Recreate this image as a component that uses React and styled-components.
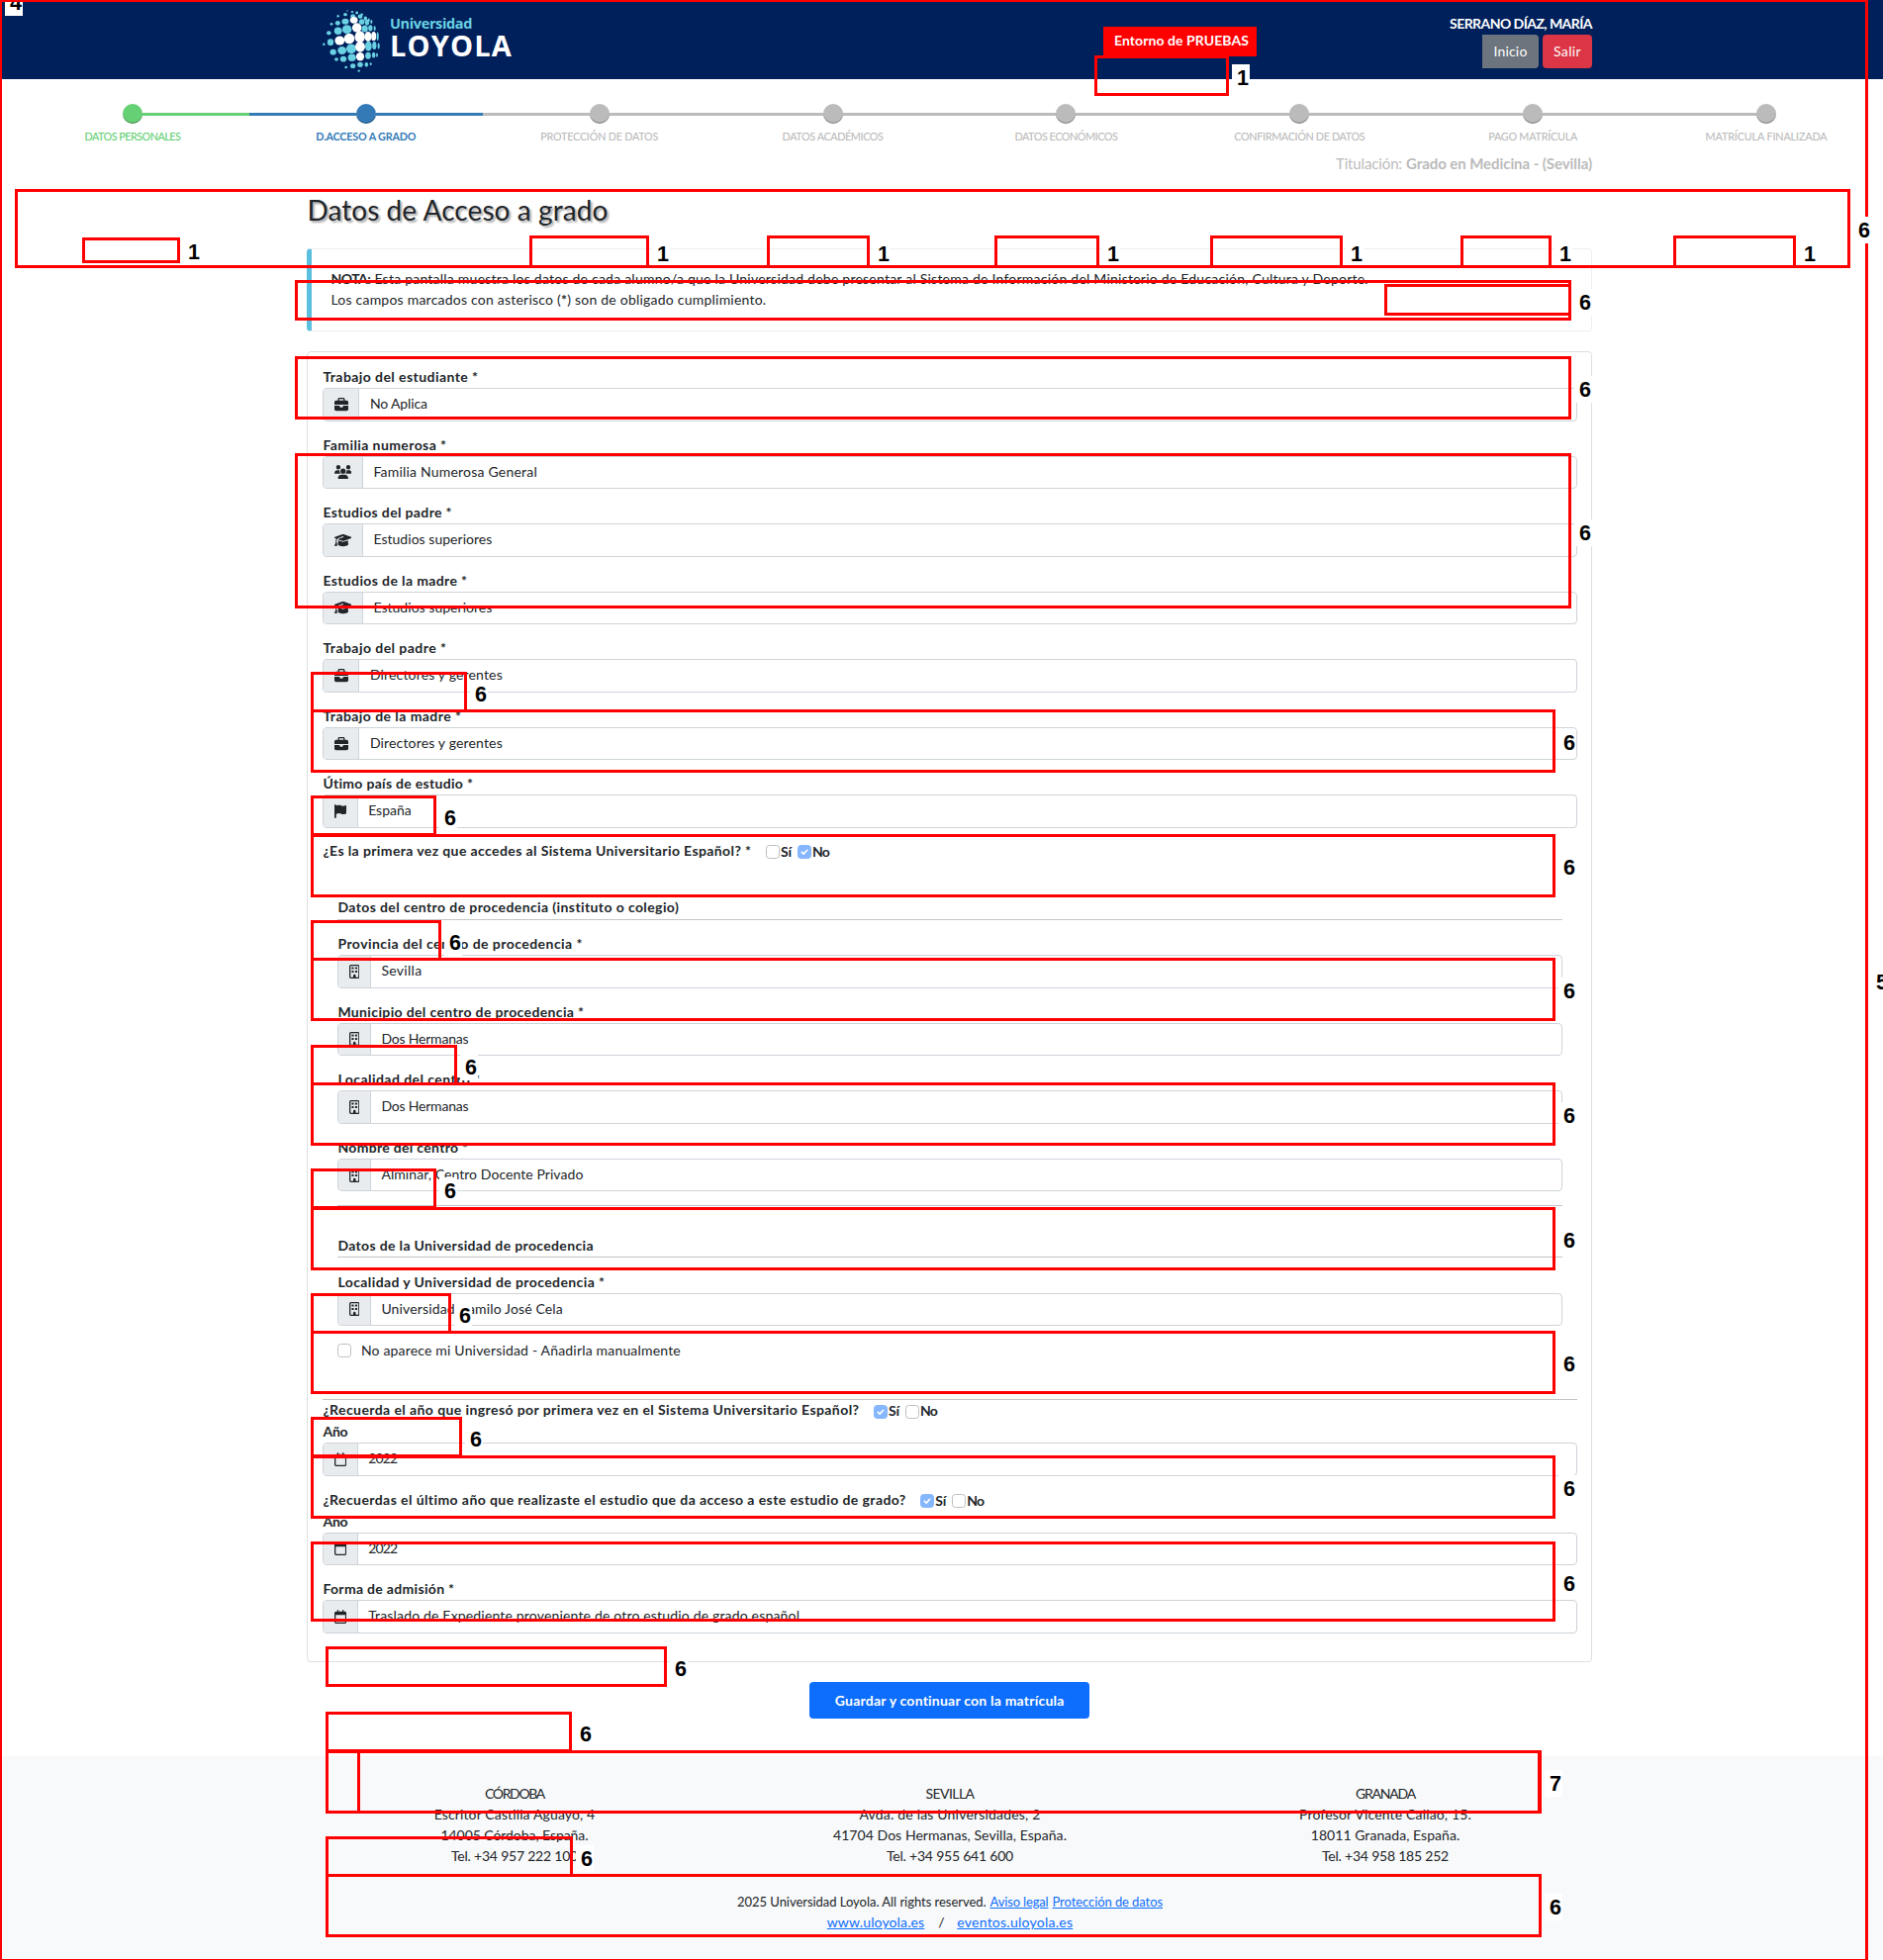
import React, { useLayoutEffect, useRef, useState } from "react";
import styled, { createGlobalStyle, css } from "styled-components";
import {
  FaBriefcase,
  FaUsers,
  FaGraduationCap,
  FaFlag,
  FaRegBuilding,
  FaRegCalendar,
} from "react-icons/fa6";

const GlobalStyle = createGlobalStyle`
  *, *::before, *::after { box-sizing: border-box; }
  html, body { margin: 0; padding: 0; overflow: hidden; }
  body {
    font-family: Lato, "Open Sans", sans-serif;
    font-size: 14px;
    line-height: 21px;
    color: #212529;
    background: #fff;
  }
`;

/* Text whose tracking is computed so that the line takes a given width. */
const FitText = styled.span`
  display: inline-block;
  white-space: pre;
  text-decoration: inherit;
`;

function Fit({ w, children }) {
  const ref = useRef(null);
  const [tracking, setTracking] = useState(0);
  useLayoutEffect(() => {
    const el = ref.current;
    const previous = el.style.letterSpacing;
    el.style.letterSpacing = "0px";
    const natural = el.getBoundingClientRect().width;
    el.style.letterSpacing = previous;
    setTracking((w - natural) / el.textContent.length);
  }, [w]);
  return (
    <FitText ref={ref} style={{ letterSpacing: `${tracking}px` }}>
      {children}
    </FitText>
  );
}

const Viewport = styled.div`
  position: relative;
  width: 1903px;
  height: 1981px;
  overflow: hidden;
`;

const Page = styled.div`
  display: flex;
  flex-direction: column;
  width: 1920px;
  height: 1981px;
`;

const Header = styled.header`
  display: flex;
  justify-content: center;
  flex: none;
  height: 80px;
  background: #00205b;
`;

const HeaderInner = styled.div`
  display: flex;
  width: 1298px;
`;

const Brand = styled.div`
  display: flex;
  flex: 1;
  padding: 5px 0 0 9px;
`;

const BrandName = styled.div`
  display: flex;
  flex-direction: column;
  margin: 9px 0 0 4px;
  font-family: "Open Sans", sans-serif;
  color: #fff;
`;

const BrandTop = styled.span`
  font-size: 14.5px;
  font-weight: 700;
  line-height: 20px;
  color: #6ad1e3;
`;

const BrandMain = styled.span`
  margin-top: -6px;
  font-size: 29px;
  font-weight: 700;
  line-height: 36px;
`;

const EnvTag = styled.div`
  height: 30px;
  width: 155px;
  margin: 27px 195px 0 0;
  padding: 3px 0 0 11px;
  background: #f00;
  color: #fff;
  font-weight: 700;
`;

const Account = styled.div`
  display: flex;
  flex-direction: column;
  align-items: flex-end;
  width: 144px;
  padding-top: 13px;
  color: #fff;
  font-weight: 700;
`;

const AccountButtons = styled.div`
  display: flex;
  gap: 4px;
  margin-top: 1px;
`;

const SmallButton = styled.button`
  width: ${(p) => p.$width}px;
  height: 34px;
  padding: 0 0 2px;
  border: 0;
  border-radius: ${(p) => (p.$danger ? "4px" : "0 4px 4px 0")};
  background: ${(p) => (p.$danger ? "#dc3545" : "#6c757d")};
  color: #fff;
  font: 400 14px/21px Lato, sans-serif;
`;

const Steps = styled.ol`
  display: flex;
  flex: none;
  width: 1887px;
  height: 68px;
  margin: 25px 0 0 16px;
  padding: 0;
  list-style: none;
`;

const stepColor = { done: "#65d074", active: "#337ab7", idle: "#bbb" };

const Step = styled.li`
  display: flex;
  flex-direction: column;
  align-items: center;
  flex: 1;
  color: ${(p) => stepColor[p.$state]};
  font-size: 10.8px;
  font-weight: ${(p) => (p.$state === "active" ? 700 : 500)};
  text-align: center;
`;

const StepTrack = styled.div`
  display: flex;
  align-items: center;
  width: 100%;
  height: 20px;
`;

const StepLine = styled.span`
  flex: 1;
  height: 3px;
  margin-top: 1px;
  background: ${(p) => (p.$hidden ? "transparent" : "currentColor")};
`;

const StepDot = styled.span`
  width: 20px;
  height: 20px;
  border-radius: 50%;
  background: currentColor;
  box-shadow: inset 0 -1px 0 rgba(0, 0, 0, 0.35);
`;

const StepLabel = styled.span`
  margin-top: 2px;
`;

const Container = styled.main`
  display: flex;
  flex-direction: column;
  flex: none;
  width: 1298.6px;
  height: 1602px;
  margin-left: 310.4px;
`;

const Degree = styled.div`
  display: flex;
  justify-content: flex-end;
  gap: 4px;
  margin-top: -18px;
  font-size: 15px;
  color: #bbb;
`;

const Title = styled.h1`
  margin: 18px 0 0;
  font-size: 28px;
  font-weight: 400;
  line-height: 36px;
  text-shadow: 2px 2px 2px #aaa;
`;

const Note = styled.section`
  height: 84px;
  margin-top: 21px;
  padding: 19px 19px;
  border: 1px solid #eee;
  border-left: 5px solid #5bc0de;
  border-radius: 4px;
`;

const NoteLine = styled.div`
  display: flex;
  gap: 4px;
  height: 21px;
`;

const Card = styled.form`
  height: 1325px;
  margin-top: 20px;
  padding: 15px 14px 0 15px;
  border: 1px solid #dfdfdf;
  border-radius: 4px;
`;

const FieldBlock = styled.div`
  display: flex;
  flex-direction: column;
  height: 68.57px;
`;

const Label = styled.label`
  height: 21px;
  font-weight: 700;
  line-height: 19px;
`;

const InputGroup = styled.div`
  display: flex;
  height: 33.57px;
  border: 1px solid #ced4da;
  border-radius: 4px;
  overflow: hidden;
`;

/* The cell follows the width of the glyph in it; its height is fixed. */
const Addon = styled.span`
  display: flex;
  align-items: center;
  flex: none;
  padding: 0 10.5px;
  border-right: 1px solid #ced4da;
  background: #e9ecef;

  svg {
    width: ${(p) => p.$glyph}px;
    height: 14px;
  }
`;

const Value = styled.span`
  padding: 4px 10.5px;
`;

const Question = styled.div`
  display: flex;
  height: ${(p) => p.$height}px;
  margin-top: ${(p) => p.$lift || 0}px;
  font-weight: 700;
  line-height: 19px;
`;

const Option = styled.span`
  display: flex;
  align-items: flex-start;
  padding-top: 1px;
  margin-left: ${(p) => p.$gap}px;
`;

const Box = styled.span`
  display: flex;
  align-items: center;
  justify-content: center;
  flex: none;
  width: 14px;
  height: 14px;
  margin: 3.5px 1px 0 0;
  border: 1px solid #bfbfbf;
  border-radius: 3.5px;
  ${(p) =>
    p.$checked &&
    css`
      border-color: #86b7fe;
      background: #86b7fe;
    `}
`;

const Section = styled.section`
  height: ${(p) => p.$height}px;
  padding: 0 15px;
`;

const SectionTitle = styled.h2`
  height: 22.3px;
  margin: 0 0 14.3px;
  border-bottom: 1px solid #c4c5c6;
  font-size: 14px;
  font-weight: 700;
  line-height: 20px;
`;

const Divider = styled.div`
  height: 1px;
  background: #c4c5c6;
`;

const ManualRow = styled.div`
  display: flex;
  gap: 8.5px;
`;

const Submit = styled.button`
  align-self: center;
  width: 283px;
  height: 37px;
  margin-top: 20px;
  padding: 0;
  border: 0;
  border-radius: 4px;
  background: #0d6efd;
  color: #fff;
  font: 700 14px/21px Lato, sans-serif;
`;

const Footer = styled.footer`
  flex: 1;
  background: #f8f9fa;
`;

const Campuses = styled.div`
  display: grid;
  grid-template-columns: repeat(3, 440px);
  justify-content: center;
  padding-top: 27px;
`;

const Campus = styled.address`
  display: flex;
  flex-direction: column;
  align-items: center;
  font-style: normal;
`;

const FooterRow = styled.div`
  display: flex;
  justify-content: center;
  gap: ${(p) => p.$gap}px;
  margin-top: ${(p) => p.$top}px;
  font-size: ${(p) => p.$size}px;
  line-height: 21px;
`;

const Link = styled.a`
  color: #0d6efd;
  text-decoration: underline;
`;

/* Review overlay: red frames over the page with a count beside each. */
const Overlay = styled.div`
  position: absolute;
  inset: 0;
  pointer-events: none;
`;

const Frame = styled.div`
  position: absolute;
  left: ${(p) => p.$x}px;
  top: ${(p) => p.$y}px;
  width: ${(p) => p.$r - p.$x}px;
  height: ${(p) => p.$b - p.$y}px;
  border: solid #f00;
  border-width: ${(p) => p.$bw || "3px"};
`;

const Count = styled.div`
  position: absolute;
  left: ${(p) => p.$x}px;
  top: ${(p) => p.$y}px;
  width: 18px;
  height: 27px;
  padding-left: 5px;
  background: #fff;
  color: #000;
  font: 700 21.5px/28px "Liberation Sans", Arial, sans-serif;
`;

const C = "#6ad1e3";
const W = "#fff";
const globeDots = [
  [93, 18, 2, 2, C], [108, 21, 4, 3, C], [122, 24, 4, 4, C], [137, 29, 4, 3, C],
  [65, 34, 3.5, 3.5, C], [87, 29, 5.5, 4.5, C], [110, 34, 7, 6, C], [132, 35, 7, 6, C], [148, 41, 5, 6, C], [158, 46, 3, 5, C],
  [45, 58, 4, 4, C], [64, 55, 7, 6.5, C], [87, 50, 10, 8.5, C], [113, 46, 11, 9.5, W], [137, 51, 8, 8, C], [153, 53, 6, 8, C], [166, 51, 3, 6, C],
  [37, 85, 6.5, 6, C], [65, 79, 11, 10.5, C], [92, 74, 13.5, 12.5, C], [122, 69, 13.5, 13.5, W], [146, 72, 9, 10, C], [163, 70, 6, 9, C], [176, 71, 3, 7, C],
  [22, 119, 3.5, 3.5, C], [42, 113, 9, 9.5, C], [70, 108, 14, 13, W], [99, 102, 15, 15, W], [131, 97, 14.5, 17, W], [156, 96, 10, 14, W], [173, 95, 7, 13, W], [185, 95, 3, 12, C],
  [50, 143, 9, 8, C], [77, 138, 12.5, 11.5, C], [105, 133, 14, 14, C], [132, 127, 14, 15, W], [157, 125, 9.5, 14, C], [175, 123, 6, 11, C], [188, 124, 3, 9, C],
  [60, 165, 5.5, 5, C], [81, 164, 9, 8, C], [107, 160, 11.5, 10.5, C], [132, 157, 11.5, 12, W], [156, 154, 8, 10, C], [173, 152, 5, 8, C], [183, 152, 2.5, 6, C],
  [89, 189, 4, 3.5, C], [110, 185, 7.5, 6.5, C], [132, 181, 8, 7.5, C], [151, 181, 5, 6.5, C], [164, 179, 3, 4, C],
  [128, 200, 3.5, 3, C],
];

const steps = [
  ["DATOS PERSONALES", 97, "done"],
  ["D.ACCESO A GRADO", 101, "active"],
  ["PROTECCIÓN DE DATOS", 119, "idle"],
  ["DATOS ACADÉMICOS", 102, "idle"],
  ["DATOS ECONÓMICOS", 104, "idle"],
  ["CONFIRMACIÓN DE DATOS", 132, "idle"],
  ["PAGO MATRÍCULA", 90, "idle"],
  ["MATRÍCULA FINALIZADA", 123, "idle"],
];

const icons = {
  briefcase: [FaBriefcase, 14],
  users: [FaUsers, 17.5],
  cap: [FaGraduationCap, 17.5],
  flag: [FaFlag, 12.25],
  building: [FaRegBuilding, 10.5],
  calendar: [FaRegCalendar, 12.25],
};

const familyFields = [
  ["Trabajo del estudiante *", 157, "briefcase", "No Aplica", 58],
  ["Familia numerosa *", 125, "users", "Familia Numerosa General", 165.5],
  ["Estudios del padre *", 130.5, "cap", "Estudios superiores", 120],
  ["Estudios de la madre *", 146, "cap", "Estudios superiores", 120],
  ["Trabajo del padre *", 125, "briefcase", "Directores y gerentes", 134],
  ["Trabajo de la madre *", 140, "briefcase", "Directores y gerentes", 134],
  ["Útimo país de estudio *", 152, "flag", "España", 43.5],
];

const schoolFields = [
  ["Provincia del centro de procedencia *", 247.5, "building", "Sevilla", 41],
  ["Municipio del centro de procedencia *", 249, "building", "Dos Hermanas", 88],
  ["Localidad del centro *", 144, "building", "Dos Hermanas", 88],
  ["Nombre del centro *", 132, "building", "Alminar, Centro Docente Privado", 204],
];

const campuses = [
  [["CÓRDOBA", 60], ["Escritor Castilla Aguayo, 4", 163], ["14005 Córdoba, España.", 149], ["Tel. +34 957 222 100", 128]],
  [["SEVILLA", 49], ["Avda. de las Universidades, 2", 183], ["41704 Dos Hermanas, Sevilla, España.", 236], ["Tel. +34 955 641 600", 128]],
  [["GRANADA", 60], ["Profesor Vicente Callao, 15.", 174], ["18011 Granada, España.", 150.5], ["Tel. +34 958 185 252", 128]],
];

/* [left, top, right, bottom, count] */
const frames = [
  [1106, 56, 1242, 97, 1],
  [83, 240, 182, 266, 1],
  [535, 238, 656, 271, 1],
  [775, 238, 879, 271, 1],
  [1005, 238, 1111, 271, 1],
  [1223, 238, 1357, 271, 1],
  [1476, 238, 1568, 271, 1],
  [1691, 238, 1815, 271, 1],
  [15, 191, 1870, 271],
  [298, 283, 1588, 324, 6],
  [1399, 287, 1588, 319],
  [298, 360, 1588, 424, 6],
  [298, 458, 1588, 615, 6],
  [314, 679, 472, 720, 6],
  [314, 717, 1572, 781, 6],
  [314, 804, 441, 845, 6],
  [314, 843, 1572, 907, 6],
  [314, 930, 446, 971, 6],
  [314, 968, 1572, 1032, 6],
  [314, 1056, 462, 1097, 6],
  [314, 1094, 1572, 1158, 6],
  [314, 1181, 441, 1222, 6],
  [314, 1220, 1572, 1284, 6],
  [314, 1307, 456, 1348, 6],
  [314, 1345, 1572, 1409, 6],
  [314, 1432, 467, 1473, 6],
  [314, 1471, 1572, 1535, 6],
  [314, 1558, 1572, 1639, 6],
  [329, 1664, 674, 1705, 6],
  [329, 1730, 578, 1771, 6],
  [361, 1769, 1557, 1833],
  [329, 1769, 1558, 1833, 7],
  [329, 1856, 579, 1897, 6],
  [329, 1894, 1558, 1958, 6],
];

function Globe() {
  return (
    <svg width="70" height="72" viewBox="0 0 210 216">
      {globeDots.map(([cx, cy, rx, ry, fill]) => (
        <ellipse key={`${cx}-${cy}`} cx={cx} cy={cy} rx={rx * 1.06} ry={ry * 1.06} fill={fill} />
      ))}
    </svg>
  );
}

function Field({ label, labelWidth, icon, value, valueWidth }) {
  const [Icon, glyph] = icons[icon];
  return (
    <FieldBlock>
      <Label><Fit w={labelWidth}>{label}</Fit></Label>
      <InputGroup>
        <Addon $glyph={glyph}><Icon /></Addon>
        <Value><Fit w={valueWidth}>{value}</Fit></Value>
      </InputGroup>
    </FieldBlock>
  );
}

const renderFields = (fields) =>
  fields.map(([label, lw, icon, value, vw]) => (
    <Field key={label} label={label} labelWidth={lw} icon={icon} value={value} valueWidth={vw} />
  ));

function Check({ checked }) {
  return (
    <Box $checked={checked}>
      {checked && (
        <svg width="8" height="8" viewBox="0 0 8 8">
          <path d="M1.2 4.2l1.9 1.9 3.6-3.8" fill="none" stroke="#fff" strokeWidth="1.6" strokeLinecap="round" strokeLinejoin="round" />
        </svg>
      )}
    </Box>
  );
}

function YesNo({ text, width, yes, height, lift }) {
  return (
    <Question $height={height} $lift={lift}>
      <Fit w={width}>{text}</Fit>
      <Option $gap={14.5}><Check checked={yes} /><Fit w={11}>Sí</Fit></Option>
      <Option $gap={6}><Check checked={!yes} /><Fit w={17}>No</Fit></Option>
    </Question>
  );
}

export default function App() {
  return (
    <Viewport>
      <GlobalStyle />
      <Page>
        <Header>
          <HeaderInner>
            <Brand>
              <Globe />
              <BrandName>
                <BrandTop><Fit w={83}>Universidad</Fit></BrandTop>
                <BrandMain><Fit w={124}>LOYOLA</Fit></BrandMain>
              </BrandName>
            </Brand>
            <EnvTag><Fit w={136}>Entorno de PRUEBAS</Fit></EnvTag>
            <Account>
              <Fit w={144}>SERRANO DÍAZ, MARÍA</Fit>
              <AccountButtons>
                <SmallButton $width={57}><Fit w={34}>Inicio</Fit></SmallButton>
                <SmallButton $width={50} $danger><Fit w={28}>Salir</Fit></SmallButton>
              </AccountButtons>
            </Account>
          </HeaderInner>
        </Header>

        <Steps>
          {steps.map(([name, width, state], i) => (
            <Step key={name} $state={state}>
              <StepTrack>
                <StepLine $hidden={i === 0} />
                <StepDot />
                <StepLine $hidden={i === steps.length - 1} />
              </StepTrack>
              <StepLabel><Fit w={width}>{name}</Fit></StepLabel>
            </Step>
          ))}
        </Steps>

        <Container>
          <Degree>
            <Fit w={67}>Titulación:</Fit>
            <b><Fit w={188}>Grado en Medicina - (Sevilla)</Fit></b>
          </Degree>
          <Title><Fit w={304}>Datos de Acceso a grado</Fit></Title>
          <Note>
            <NoteLine>
              <b><Fit w={40}>NOTA:</Fit></b>
              <Fit w={1004.5}>Esta pantalla muestra los datos de cada alumno/a que la Universidad debe presentar al Sistema de Información del Ministerio de Educación, Cultura y Deporte.</Fit>
            </NoteLine>
            <NoteLine>
              <Fit w={440}>Los campos marcados con asterisco (<b>*</b>) son de obligado cumplimiento.</Fit>
            </NoteLine>
          </Note>

          <Card>
            {renderFields(familyFields)}
            <YesNo text="¿Es la primera vez que accedes al Sistema Universitario Español? *" width={433} height={57.5} lift={-1} />
            <Section $height={341.5}>
              <SectionTitle><Fit w={345}>Datos del centro de procedencia (instituto o colegio)</Fit></SectionTitle>
              {renderFields(schoolFields)}
              <Divider />
            </Section>
            <Section $height={165.5}>
              <SectionTitle><Fit w={258.5}>Datos de la Universidad de procedencia</Fit></SectionTitle>
              <Field label="Localidad y Universidad de procedencia *" labelWidth={270} icon="building" value="Universidad Camilo José Cela" valueWidth={183.5} />
              <ManualRow>
                <Box />
                <Fit w={323}>No aparece mi Universidad - Añadirla manualmente</Fit>
              </ManualRow>
            </Section>
            <Divider />
            <YesNo text="¿Recuerda el año que ingresó por primera vez en el Sistema Universitario Español?" width={542} yes height={21.8} />
            <Field label="Año" labelWidth={25} icon="calendar" value="2022" valueWidth={29} />
            <YesNo text="¿Recuerdas el último año que realizaste el estudio que da acceso a este estudio de grado?" width={589.5} yes height={21.8} />
            <Field label="Año" labelWidth={25} icon="calendar" value="2022" valueWidth={29} />
            <Field label="Forma de admisión *" labelWidth={133} icon="calendar" value="Traslado de Expediente proveniente de otro estudio de grado español" valueWidth={436} />
          </Card>

          <Submit type="button"><Fit w={232}>Guardar y continuar con la matrícula</Fit></Submit>
        </Container>

        <Footer>
          <Campuses>
            {campuses.map((lines) => (
              <Campus key={lines[0][0]}>
                {lines.map(([text, width]) => (
                  <Fit key={text} w={width}>{text}</Fit>
                ))}
              </Campus>
            ))}
          </Campuses>
          <FooterRow $top={26} $gap={4} $size={13}>
            <Fit w={251.5}>2025 Universidad Loyola. All rights reserved.</Fit>
            <Link><Fit w={59}>Aviso legal</Fit></Link>
            <Link><Fit w={111.5}>Protección de datos</Fit></Link>
          </FooterRow>
          <FooterRow $top={-1} $gap={14} $size={14}>
            <Link><Fit w={98.5}>www.uloyola.es</Fit></Link>
            <Fit w={5}>/</Fit>
            <Link><Fit w={117}>eventos.uloyola.es</Fit></Link>
          </FooterRow>
        </Footer>
      </Page>

      <Overlay>
        {frames
          .filter((frame) => frame[4])
          .map(([x, y, r, b, count]) => (
            <Count key={`${x}-${y}-${r}`} $x={r + 3} $y={Math.round((y + b) / 2) - 12}>
              {count}
            </Count>
          ))}
        <Count $x={5} $y={-11}>4</Count>
        <Frame $x={0} $y={0} $r={1888} $b={1981} $bw="2px 3px 1px 2px" />
        <Count $x={1873} $y={219}>6</Count>
        <Count $x={1891} $y={979}>5</Count>
        {frames.map(([x, y, r, b]) => (
          <Frame key={`${x}-${y}-${r}`} $x={x} $y={y} $r={r} $b={b} />
        ))}
      </Overlay>
    </Viewport>
  );
}
